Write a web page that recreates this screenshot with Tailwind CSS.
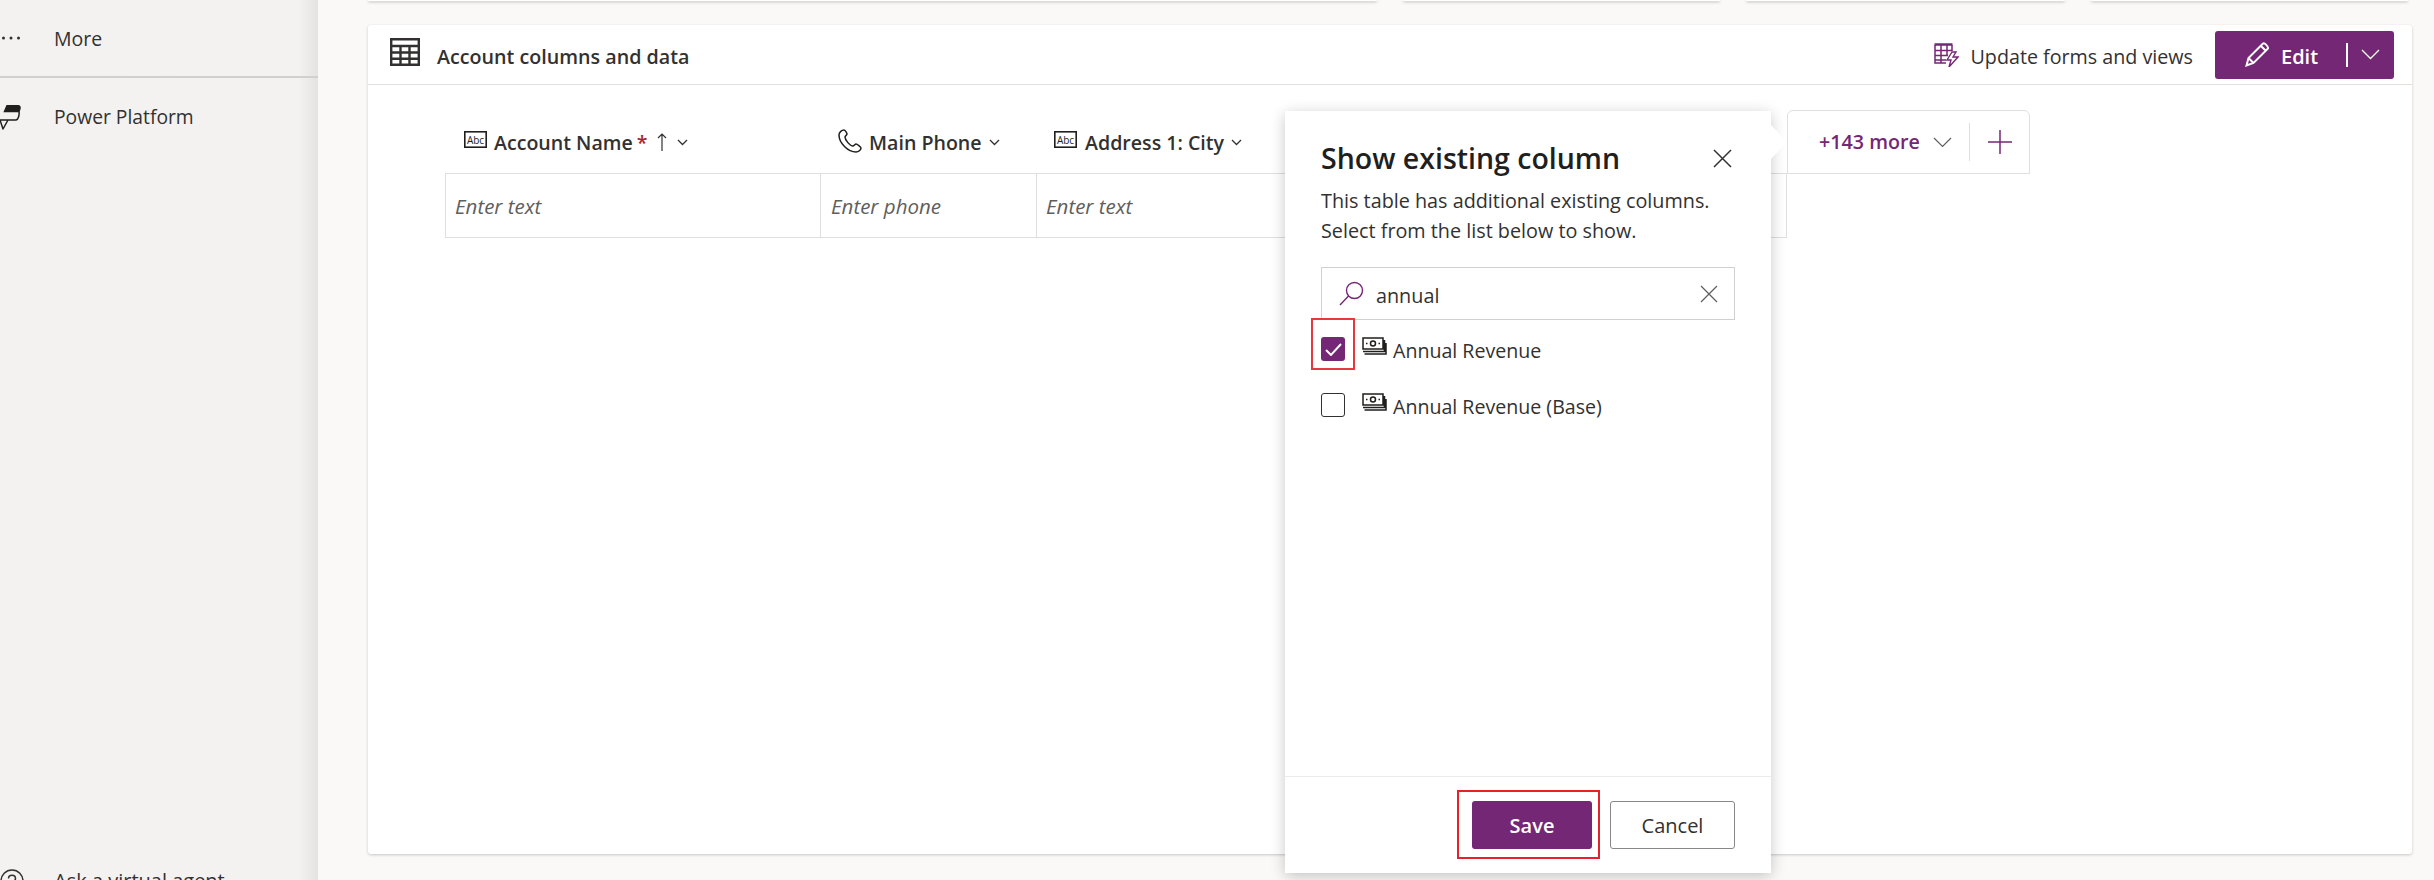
<!DOCTYPE html>
<html lang="en">
<head>
    <meta charset="UTF-8">
    <title>Account columns and data</title>
    <script src="https://cdn.jsdelivr.net/npm/@tailwindcss/browser@4"></script>
</head>
<body class="bg-[#faf9f8] font-['Open_Sans',sans-serif] text-[#323130]">
    <div class="relative flex w-[2434px] h-[880px] overflow-hidden">
        <!-- Left nav -->
        <aside class="w-[318px] h-full shrink-0 bg-gradient-to-r from-[#f3f2f1] from-[94%] to-[#e4e3e2] overflow-hidden">
            <div class="flex items-center h-[76px]">
                <div class="w-[54px]">
                    <svg class="w-[22px] h-[4px]" viewBox="0 0 22 4" fill="#323130">
                        <circle cx="3.500" cy="2" r="1.500" /><circle cx="11" cy="2" r="1.500" /><circle cx="18.500" cy="2" r="1.500" />
                    </svg>
                </div>
                <span class="text-[19.5px] pt-[2px]">More</span>
            </div>
            <div class="h-[2px] bg-[#d2d0ce]"></div>
            <div class="flex items-center h-[78px]">
                <div class="w-[54px]">
                    <svg class="w-[21px] h-[25px]" viewBox="0 0 21 25" fill="none" stroke="#201f1e" stroke-width="1.500">
                        <path d="M7 .7h11c2 0 2.300 1.800 1.800 3.300l-.8 2.500H4.500z" fill="#201f1e" />
                        <path d="M19 6.500c.5 3-.5 8-3 8.500H-1M8 15l-5 9-3-9" stroke-linejoin="round" />
                    </svg>
                </div>
                <span class="text-[19.3px]">Power Platform</span>
            </div>
            <div class="flex items-center mt-[713px] h-[24px]">
                <div class="w-[54px]">
                    <svg class="w-[24px] h-[24px]" viewBox="0 0 24 24" fill="none" stroke="#323130" stroke-width="1.500">
                        <circle cx="12" cy="12" r="11" />
                        <path d="M8.500 9.500c0-4.500 7-4.500 7 0 0 3-3.500 2.500-3.500 5.500" />
                    </svg>
                </div>
                <span class="text-[20px]">Ask a virtual agent</span>
            </div>
        </aside>

        <!-- Main -->
        <main class="flex-1 ml-[2px] pl-[48px] pr-[22px] bg-[#faf9f8]">
            <div class="flex gap-[26px] h-px">
                <div class="w-[1009px] bg-white shadow-[0_1px_3px_rgba(0,0,0,0.4)] rounded-b"></div>
                <div class="w-[317px] bg-white shadow-[0_1px_3px_rgba(0,0,0,0.4)] rounded-b"></div>
                <div class="w-[319px] bg-white shadow-[0_1px_3px_rgba(0,0,0,0.4)] rounded-b"></div>
                <div class="w-[317px] bg-white shadow-[0_1px_3px_rgba(0,0,0,0.4)] rounded-b"></div>
            </div>

            <section class="mt-[24px] h-[829px] bg-white rounded-[3px] shadow-[0_1px_3px_rgba(0,0,0,0.2)]">
                <!-- Card header -->
                <div class="flex items-center h-[60px] pl-[22px] pr-[18px] border-b border-[#e1dfdd]">
                    <svg class="w-[30px] h-[28px] -mt-[6px]" viewBox="0 0 30 28" fill="none" stroke="#323130" stroke-width="2.400">
                        <path d="M1.200 1.200h27.600v25.600H1.200zM1.200 8h27.600M1.200 14.500h27.600M1.200 20.700h27.600M10.500 8v19M19.500 8v19" />
                    </svg>
                    <h2 class="ml-[17px] pt-[4px] text-[19.7px] font-semibold">Account columns and data</h2>
                    <div class="ml-auto flex items-center">
                        <svg class="w-[25px] h-[24px]" viewBox="0 0 25 24" fill="none" stroke-width="1.500">
                            <path d="M1 2v18h11M1 7.500h17M1 12.500h13M1 17h11M7 2v18M13 2v11M18 2v6" stroke="#742774" />
                            <path d="M.5 1.500h18" stroke="#742774" stroke-width="2.500" />
                            <path d="M18 9l-5 8h4l-2 7 9-10h-5l3-5z" fill="#fff" stroke="#742774" stroke-width="1.400" />
                        </svg>
                        <span class="ml-[12px] pt-[4px] text-[19.7px]">Update forms and views</span>
                        <button class="ml-[22px] w-[179px] h-[48px] rounded-[3px] bg-[#742774] text-white flex items-center">
                            <svg class="ml-[30px] w-[25px] h-[25px]" viewBox="0 0 25 25" fill="none" stroke="#fff" stroke-width="2">
                                <path d="M1.500 23.500l2-7.500L18 1.500c1.500-1 5.500 3 5 5L8.500 21zM3.500 16l5 5M16 4l5 5" />
                            </svg>
                            <span class="ml-[11px] pt-[4px] text-[20px] font-semibold">Edit</span>
                            <span class="ml-[28px] w-[2px] h-[24px] bg-white"></span>
                            <svg class="ml-[13px] w-[19px] h-[11px]" viewBox="0 0 19 11" fill="none" stroke="#fff" stroke-width="1.300">
                                <path d="M1 1l8.500 8.500L18 1" />
                            </svg>
                        </button>
                    </div>
                </div>

                <!-- Column grid -->
                <div class="relative pt-[24px] pl-[77px]">
                    <div class="flex h-[64px] w-[1342px] items-start pt-[13px]">
                        <div class="flex items-center w-[375px] h-[40px] pl-[19px]">
                            <svg class="w-[23px] h-[17px] -mt-[6px]" viewBox="0 0 23 17" fill="none">
                                <rect x="0.800" y="0.800" width="21.400" height="15.400" stroke="#201f1e" stroke-width="1.600" />
                                <text x="11.500" y="12.500" text-anchor="middle" font-size="10" font-family="Open Sans" fill="#201f1e">Abc</text>
                            </svg>
                            <span class="ml-[7px] pt-[2px] text-[19.6px] font-semibold">Account Name</span>
                            <span class="ml-[4px] pt-[2px] text-[19.6px] font-semibold text-[#a4262c]">*</span>
                            <svg class="ml-[9px] w-[10px] h-[18px]" viewBox="0 0 10 18" fill="none" stroke="#323130" stroke-width="1.200"><path d="M5 18V1M1 5l4-4 4 4" /></svg>
                            <svg class="ml-[10px] w-[11px] h-[7px]" viewBox="0 0 11 7" fill="none" stroke="#323130" stroke-width="1.300"><path d="M1 1l4.500 4.500L10 1" /></svg>
                        </div>
                        <div class="flex items-center w-[216px] h-[40px] pl-[18px]">
                            <svg class="w-[24px] h-[24px] -mt-[2px] shrink-0" viewBox="0 0 24 24" fill="none" stroke="#201f1e" stroke-width="1.500" stroke-linejoin="round">
                                <path d="M6 1C4 1 1 3 1 6c0 8 9 17 17 17 2.500 0 5-2 5-4 0-1-4-4-5-4s-2 2-3 2c-3 0-8-6-8-9 0-1 2-2 2-3S7 1 6 1z" />
                            </svg>
                            <span class="ml-[7px] pt-[2px] text-[19.6px] font-semibold">Main Phone</span>
                            <svg class="ml-[7px] w-[11px] h-[7px]" viewBox="0 0 11 7" fill="none" stroke="#323130" stroke-width="1.300"><path d="M1 1l4.500 4.500L10 1" /></svg>
                        </div>
                        <div class="flex items-center h-[40px] pl-[18px]">
                            <svg class="w-[23px] h-[17px] -mt-[6px]" viewBox="0 0 23 17" fill="none">
                                <rect x="0.800" y="0.800" width="21.400" height="15.400" stroke="#201f1e" stroke-width="1.600" />
                                <text x="11.500" y="12.500" text-anchor="middle" font-size="10" font-family="Open Sans" fill="#201f1e">Abc</text>
                            </svg>
                            <span class="ml-[8px] pt-[2px] text-[19.6px] font-semibold">Address 1: City</span>
                            <svg class="ml-[7px] w-[11px] h-[7px]" viewBox="0 0 11 7" fill="none" stroke="#323130" stroke-width="1.300"><path d="M1 1l4.500 4.500L10 1" /></svg>
                        </div>
                    </div>
                    <div class="flex h-[65px] w-[1342px] border border-[#e1dfdd] text-[20.5px] italic text-[#605e5c]">
                        <div class="w-[375px] pl-[9px] pt-[2px] flex items-center border-r border-[#e1dfdd]">Enter text</div>
                        <div class="w-[216px] pl-[10px] pt-[2px] flex items-center border-r border-[#e1dfdd]">Enter phone</div>
                        <div class="flex-1 pl-[9px] pt-[2px] flex items-center">Enter text</div>
                    </div>

                    <!-- +143 more -->
                    <div class="absolute left-[1419px] top-[25px] w-[243px] h-[64px] flex items-center bg-white border border-[#e1dfdd] rounded-t-[6px]">
                        <span class="ml-[31px] text-[19.7px] font-semibold text-[#742774]">+143 more</span>
                        <svg class="ml-[13px] w-[19px] h-[11px]" viewBox="0 0 19 11" fill="none" stroke="#605e5c" stroke-width="1.200"><path d="M1 1l8.500 8.500L18 1" /></svg>
                        <span class="ml-[17px] w-px h-[38px] bg-[#e1dfdd]"></span>
                        <svg class="ml-[18px] w-[24px] h-[24px]" viewBox="0 0 24 24" fill="none" stroke="#742774" stroke-width="1.500"><path d="M12 0v24M0 12h24" /></svg>
                    </div>
                </div>
            </section>
        </main>

        <!-- Show existing column flyout -->
        <div class="absolute left-[1285px] top-[111px] w-[486px] h-[762px] bg-white shadow-[0_3px_14px_rgba(0,0,0,0.22)] flex flex-col">
            <svg class="absolute left-[486px] top-[14px] w-[16px] h-[34px]" viewBox="0 0 16 34"><path d="M0 0l16 17L0 34z" fill="#fff" /></svg>
            <div class="flex-1 px-[36px]">
                <div class="flex items-center justify-between mt-[29px] h-[36px]">
                    <h2 class="text-[28.5px] font-semibold text-[#201f1e]">Show existing column</h2>
                    <svg class="w-[19px] h-[19px] mr-[3px]" viewBox="0 0 19 19" fill="none" stroke="#323130" stroke-width="1.500"><path d="M1 1l17 17M18 1L1 18" /></svg>
                </div>
                <p class="mt-[10px] text-[19.8px] leading-[30px]">This table has additional existing columns.<br>Select from the list below to show.</p>
                <div class="mt-[21px] h-[53px] border border-[#d2d0ce] flex items-center">
                    <svg class="ml-[17px] w-[25px] h-[25px]" viewBox="0 0 25 25" fill="none" stroke="#742774" stroke-width="1.400"><circle cx="15.500" cy="9.500" r="8" /><path d="M9.500 15L1 24" /></svg>
                    <span class="ml-[12px] pt-[4px] text-[19.8px]">annual</span>
                    <svg class="ml-auto mr-[16px] w-[18px] h-[18px]" viewBox="0 0 18 18" fill="none" stroke="#605e5c" stroke-width="1.200"><path d="M1 1l16 16M17 1L1 17" /></svg>
                </div>
                <div class="mt-[17px] flex items-center h-[24px]">
                    <div class="w-[24px] h-[24px] rounded-[3px] bg-[#742774] flex items-center justify-center">
                        <svg class="w-[17px] h-[13px]" viewBox="0 0 17 13" fill="none" stroke="#fff" stroke-width="1.900"><path d="M1 7l5 5L16 1" /></svg>
                    </div>
                    <svg class="ml-[17px] w-[25px] h-[18px] -mt-[6px]" viewBox="0 0 25 18" fill="none" stroke="#201f1e" stroke-width="1.500">
                        <path d="M1 1h20v11H1zM1 14.500h21.500V3M2.500 17h21.500V6" /><circle cx="11" cy="6.500" r="2.500" /><path d="M4 6.500h1.500M16.500 6.500H18" />
                    </svg>
                    <span class="ml-[6px] pt-[4px] text-[19.6px]">Annual Revenue</span>
                </div>
                <div class="mt-[32px] flex items-center h-[24px]">
                    <div class="w-[24px] h-[24px] rounded-[3px] border border-[#323130] bg-white"></div>
                    <svg class="ml-[17px] w-[25px] h-[18px] -mt-[6px]" viewBox="0 0 25 18" fill="none" stroke="#201f1e" stroke-width="1.500">
                        <path d="M1 1h20v11H1zM1 14.500h21.500V3M2.500 17h21.500V6" /><circle cx="11" cy="6.500" r="2.500" /><path d="M4 6.500h1.500M16.500 6.500H18" />
                    </svg>
                    <span class="ml-[6px] pt-[4px] text-[19.6px]">Annual Revenue (Base)</span>
                </div>
            </div>
            <div class="h-[97px] border-t border-[#edebe9] flex items-start justify-end pt-[24px] px-[36px] gap-[18px]">
                <button class="w-[120px] h-[48px] pt-[2px] rounded-[3px] bg-[#742774] text-white text-[20px] font-semibold">Save</button>
                <button class="w-[125px] h-[48px] pt-[2px] rounded-[3px] bg-white border border-[#8a8886] text-[20px] font-medium">Cancel</button>
            </div>
        </div>

        <!-- Red callouts -->
        <div class="absolute left-[1311px] top-[318px] w-[44px] h-[52px] border-2 border-[#e8383f]"></div>
        <div class="absolute left-[1457px] top-[790px] w-[143px] h-[69px] border-2 border-[#e8202a]"></div>
    </div>
</body>
</html>
